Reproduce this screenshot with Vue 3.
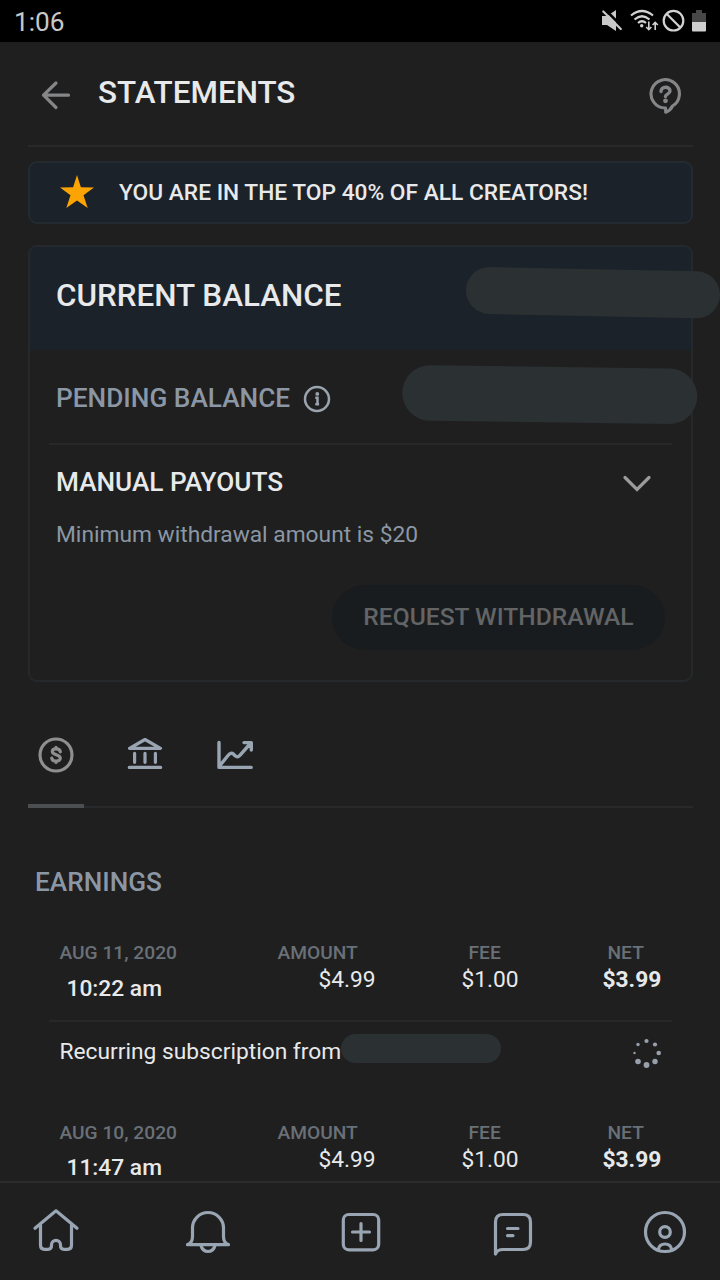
<script setup>
const entries = [
  { date: 'AUG 11, 2020', time: '10:22 am', amount: '$4.99', fee: '$1.00', net: '$3.99' },
  { date: 'AUG 10, 2020', time: '11:47 am', amount: '$4.99', fee: '$1.00', net: '$3.99' },
]
const dots = [
  [14.5, 3, 2.1], [23, 6.5, 2.1], [26.7, 15, 2.3], [23, 23.5, 2.7],
  [14.5, 27, 2.9], [6, 23.5, 2.8], [2.5, 15, 1.2], [6, 6.5, 1.7],
]
</script>

<template>
  <div class="screen">
    <div class="status">
      <span class="clock">1:06</span>
      <svg class="status-icons" width="110" height="26" viewBox="600 8 110 26">
        <path d="M602 16h5l9-6v21l-9-6h-5z" fill="#c9c9c9" />
        <path d="M604.500 9l20 20" stroke="#000" stroke-width="2.500" />
        <path d="M603.300 11.500l17.500 17.500" stroke="#c9c9c9" stroke-width="2.200" stroke-linecap="round" />
        <g fill="none" stroke="#d2d2d2" stroke-width="2.200">
          <path d="M631 15.500q11-9 22 0M634.500 19.500q7.500-6.500 15 0M638 23q4-3.500 8 0" />
          <path d="M648.800 21.500v8M646.200 27l2.600 2.700 2.600-2.700M655.200 30v-7.500M652.600 25l2.600-2.700 2.600 2.700" stroke-width="1.600" />
          <circle cx="673.500" cy="20.700" r="9.800" />
          <path d="M666.800 14l13.500 13.500" />
        </g>
        <circle cx="641.700" cy="25.800" r="1.700" fill="#d2d2d2" />
        <path d="M692 13h4v-3h6v3h4v9h-14z" fill="#484848" />
        <path d="M692 22h14v8.500a1 1 0 0 1-1 1h-12a1 1 0 0 1-1-1z" fill="#d0d0d0" />
      </svg>
    </div>

    <header class="header">
      <svg class="back" width="34" height="34" viewBox="0 0 34 34">
        <path d="M18 5L5.500 17.200 18 29.500M5.500 17.200h25" fill="none" stroke="#858688" stroke-width="3.200" stroke-linecap="round" stroke-linejoin="round" />
      </svg>
      <h1>STATEMENTS</h1>
      <svg class="help" width="36" height="40" viewBox="647 75 36 40">
        <g fill="none" stroke="#858688" stroke-width="3.100" stroke-linecap="round" stroke-linejoin="round">
          <path d="M664.500 108A14.200 14.200 0 1 1 671.500 106Q669.500 110.500 664.700 112.200Z" />
          <path d="M660 91.500c0-5.600 9-5.600 9-.4 0 3-4.500 3-4.500 5.400" stroke-width="3.400" />
        </g>
        <circle cx="664.500" cy="100.800" r="2.400" fill="#858688" />
      </svg>
    </header>

    <div class="banner">
      <svg width="36" height="36" viewBox="0 0 36 36">
        <path d="M18 1l3.900 12.200L35 13.400l-10.500 7.800L28.700 34 18 26.400 7.300 34l4.200-12.800L1 13.400l13.100-.2z" fill="#fca404" />
      </svg>
      <span>YOU ARE IN THE TOP 40% OF ALL CREATORS!</span>
    </div>

    <section class="card">
      <div class="current">
        <h2>CURRENT BALANCE</h2>
      </div>
      <div class="pending">
        <span>PENDING BALANCE</span>
        <svg width="28" height="28" viewBox="0 0 28 28">
          <circle cx="14" cy="14" r="12" fill="none" stroke="#9aa4af" stroke-width="2.500" />
          <circle cx="14.300" cy="8.900" r="1.900" fill="#9aa4af" />
          <path d="M12.300 12.800h2.200v6.200M12.300 19.200h3.800" fill="none" stroke="#9aa4af" stroke-width="2.500" />
        </svg>
      </div>
      <div class="payouts">
        <h3>MANUAL PAYOUTS</h3>
        <svg width="30" height="20" viewBox="0 0 30 20">
          <path d="M3 3.500l12 12 12-12" fill="none" stroke="#9b9b9b" stroke-width="3.200" stroke-linecap="round" />
        </svg>
      </div>
      <p class="minimum">Minimum withdrawal amount is $20</p>
      <button class="request">REQUEST WITHDRAWAL</button>
      <svg class="redaction" width="320" height="180" viewBox="400 255 320 180">
        <g stroke="#2b3033" stroke-linecap="round">
          <path d="M489.500 290.500L696.500 294.800" stroke-width="47" />
          <path d="M430 393L669.500 396.300" stroke-width="55.500" />
        </g>
      </svg>
    </section>

    <nav class="tabs">
      <div class="tab active">
        <svg width="56" height="50" viewBox="28 730 56 50" fill="none" stroke="#8f8f8f" stroke-width="3.200">
          <circle cx="56" cy="755" r="16" />
          <path d="M60.300 751.800c-.5-4-8-3.700-8-.2 0 3.800 8 2.500 8 6.600 0 4-8 3.800-8.500 0M56 747.300v1.500M56 761v1.500" stroke-linecap="round" />
        </svg>
      </div>
      <div class="tab">
        <svg width="56" height="50" viewBox="117 730 56 50" fill="none" stroke="#99a5b2" stroke-width="3.200" stroke-linecap="round" stroke-linejoin="round">
          <path d="M129.500 748.300L145 739.500l15.500 8.800zM129.300 767.400h31.400M134.600 753.300v9M145 753.300v9M155.400 753.300v9" />
        </svg>
      </div>
      <div class="tab">
        <svg width="56" height="50" viewBox="207 730 56 50" fill="none" stroke="#99a5b2" stroke-width="3.400" stroke-linecap="round" stroke-linejoin="round">
          <path d="M219 742.500v24.900h32.200M219.500 766L228 755.500q2.800-3.700 5.400-1.500l1.700 1.700q2.500 2.300 5-.6L250.800 743M244 742.600h7.300v7.400" />
        </svg>
      </div>
    </nav>

    <div class="list">
      <h2 class="earnings">EARNINGS</h2>

      <section v-for="(e, i) in entries" :key="e.date" class="entry">
        <div class="figures">
          <div class="col">
            <span class="label">{{ e.date }}</span>
            <span class="time" :class="{ raised: i > 0 }">{{ e.time }}</span>
          </div>
          <div class="col">
            <span class="label">AMOUNT</span>
            <span class="value amount">{{ e.amount }}</span>
          </div>
          <div class="col">
            <span class="label fee">FEE</span>
            <span class="value">{{ e.fee }}</span>
          </div>
          <div class="col">
            <span class="label net">NET</span>
            <span class="value strong">{{ e.net }}</span>
          </div>
        </div>
        <div v-if="i === 0" class="source">
          <span>Recurring subscription from</span>
          <i class="name-mask"></i>
          <svg width="30" height="32" viewBox="0 0 30 32" fill="#98a1ab">
            <circle v-for="(d, n) in dots" :key="n" :cx="d[0]" :cy="d[1]" :r="d[2]" />
          </svg>
        </div>
      </section>
    </div>

    <footer class="bottom">
      <svg width="48" height="48" viewBox="32 1208 48 48">
        <path d="M35 1228.300L56 1210.800l21 17.500M40.500 1225v20.300q0 4 4 4h3.500q3.500 0 3.500-3.500v-1a4.500 4.500 0 0 1 9 0v1q0 3.500 3.500 3.500h3.500q4 0 4-4V1225" />
      </svg>
      <svg width="48" height="48" viewBox="184 1208 48 48">
        <path d="M187.500 1244.700h41M187.500 1244.500q5-1.500 5-8v-8.500a15.500 15.500 0 0 1 31 0v8.500q0 6.500 5 8M201 1245.500q1.500 6 7 6t7-6" />
      </svg>
      <svg width="48" height="48" viewBox="337 1208 48 48">
        <rect x="343.300" y="1214.500" width="35.400" height="35.300" rx="5.500" />
        <path d="M361 1223.500v17M352.500 1232h17" />
      </svg>
      <svg width="48" height="48" viewBox="489 1208 48 48">
        <path d="M495.500 1254V1222q0-7.500 7.500-7.500h20q7.500 0 7.500 7.500v20q0 7.500-7.500 7.500h-20q-6 0-7.500 4.500M507.500 1228.500h10.500M507.500 1235.600h5.500" />
      </svg>
      <svg width="48" height="48" viewBox="641 1208 48 48">
        <circle cx="665" cy="1232" r="19.500" />
        <circle cx="665" cy="1232" r="5.300" />
        <path d="M658.500 1249q1-5 6.500-5t6.500 5" />
      </svg>
    </footer>
  </div>
</template>

<style>
body {
  background: #1f1f1f;
}
</style>

<style scoped>
.screen {
  width: 720px;
  height: 1280px;
  display: flex;
  flex-direction: column;
  overflow: hidden;
  background: #1f1f1f;
  color: #e8e9eb;
  font-family: Roboto, sans-serif;
  white-space: nowrap;
}
h1, h2, h3, p {
  margin: 0;
  font-weight: 500;
}
svg {
  display: block;
  flex: none;
}
.status {
  height: 42px;
  flex: none;
  display: flex;
  align-items: center;
  justify-content: space-between;
  padding: 0 10px 0 14px;
  background: #000;
}
.clock {
  font-size: 26.200px;
  line-height: 42px;
  padding-top: 1px;
  color: #c8c8c8;
}
.header {
  height: 105px;
  flex: none;
  box-sizing: border-box;
  display: flex;
  margin: 0 27px 0 28px;
  border-bottom: 2px solid #28292b;
}
.back {
  margin: 36px 0 0 10px;
}
.header h1 {
  margin-left: 26px;
  font-size: 31.400px;
  line-height: 102px;
}
.help {
  margin: 33px 9px 0 auto;
}
.banner {
  height: 63px;
  flex: none;
  box-sizing: border-box;
  display: flex;
  align-items: center;
  margin: 14px 27px 0 28px;
  padding: 0 0 2px 29px;
  border: 2px solid #232b31;
  border-radius: 9px;
  background: #1b2229;
  font-size: 22.740px;
  font-weight: 500;
}
.banner span {
  margin-left: 24px;
  padding-top: 2px;
}
.card {
  position: relative;
  height: 437px;
  flex: none;
  box-sizing: border-box;
  display: flex;
  flex-direction: column;
  margin: 21px 27px 0 28px;
  border: 2px solid #25292b;
  border-radius: 9px;
}
.current {
  height: 102.500px;
  padding-left: 26px;
  border-radius: 7px 7px 0 0;
  background: #1b2229;
}
.current h2 {
  font-size: 31.400px;
  line-height: 97px;
}
.pending {
  height: 89.500px;
  display: flex;
  align-items: center;
  margin: 0 19px;
  padding: 4px 7px 0;
  border-bottom: 2px solid #282828;
  color: #8b97a5;
  font-size: 26.250px;
  font-weight: 500;
}
.pending svg {
  margin: 2px 0 0 12.500px;
}
.payouts {
  height: 74px;
  display: flex;
  align-items: center;
  justify-content: space-between;
  padding: 0 39px 0 26px;
}
.payouts svg {
  margin-top: 4px;
}
.payouts h3 {
  font-size: 26.200px;
}
.minimum {
  padding-left: 26px;
  color: #8b97a5;
  font-size: 22.750px;
  font-weight: 400;
  line-height: 32px;
}
.request {
  align-self: flex-end;
  width: 333px;
  height: 65px;
  margin: 34px 26px 0 0;
  padding: 0 0 2px;
  border: 0;
  border-radius: 33px;
  background: #191c1f;
  color: #636465;
  font: 500 24.600px Roboto, sans-serif;
}
.redaction {
  position: absolute;
  left: 370px;
  top: 8px;
}
.tabs {
  height: 78px;
  flex: none;
  box-sizing: border-box;
  display: flex;
  gap: 33px;
  margin: 48px 27px 0 28px;
  box-shadow: inset 0 -2px #27292b;
}
.tab {
  height: 78px;
  box-sizing: border-box;
}
.tab:last-child {
  margin-left: 1px;
}
.tab.active {
  border-bottom: 4px solid #4c4f51;
}
.list {
  flex: 1;
  min-height: 0;
  overflow: hidden;
}
.earnings {
  padding: 58px 0 0 35px;
  color: #8b97a5;
  font-size: 26.200px;
  line-height: 32px;
}
.entry {
  height: 180px;
  box-sizing: border-box;
  padding: 42px 48px 0 49px;
}
.figures {
  height: 80px;
  box-sizing: border-box;
  display: grid;
  grid-template-columns: 218px 184px 141px 80px;
  padding-left: 10.500px;
}
.col {
  display: flex;
  flex-direction: column;
  align-items: flex-start;
}
.label {
  color: #697077;
  font-size: 19.200px;
  font-weight: 500;
  line-height: 26px;
}
.time {
  margin: 9px 0 0 7px;
  font-size: 22.750px;
  font-weight: 500;
  line-height: 28px;
}
.time.raised {
  margin-top: 8px;
}
.value {
  font-size: 22.750px;
  line-height: 28px;
}
.value.amount {
  margin-left: 41px;
}
.label.fee {
  margin-left: 7px;
}
.label.net {
  margin-left: 5px;
}
.value.strong {
  font-weight: 700;
}
.source {
  height: 62px;
  display: flex;
  align-items: center;
  padding: 0 10.500px;
  box-shadow: inset 0 2px #282828;
  font-size: 22.750px;
}
.name-mask {
  width: 160px;
  height: 29px;
  margin-top: -5px;
  border-radius: 15px;
  background: #2b3033;
}
.source svg {
  margin: 5px 0 0 auto;
}
.bottom {
  height: 99px;
  flex: none;
  box-sizing: border-box;
  display: flex;
  justify-content: space-between;
  padding: 25px 31px 0 32px;
  border-top: 2px solid #2a2c2d;
}
.bottom svg {
  fill: none;
  stroke: #99a5b2;
  stroke-width: 3.200;
  stroke-linecap: round;
  stroke-linejoin: round;
}
</style>
